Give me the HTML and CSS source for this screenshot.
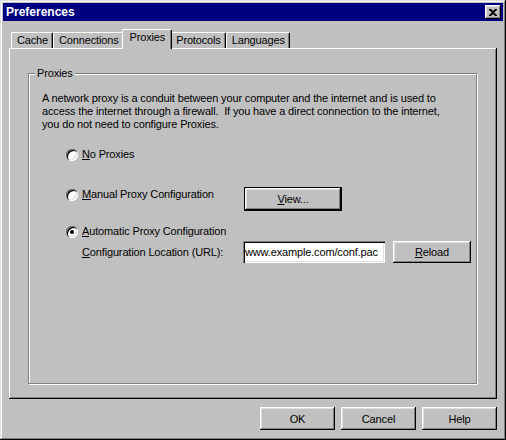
FILE: index.html
```html
<!DOCTYPE html>
<html lang="en">
<head>
<meta charset="UTF-8" />
<title>Preferences</title>
<link rel="stylesheet" href="styles.css">
</head>
<body>

  <div class="window" role="dialog" aria-label="Preferences">
    <div class="titlebar">
      <span class="title">Preferences</span>
      <button class="close" aria-label="Close">
        <svg width="8" height="7" viewBox="0 0 8 7">
          <path d="M0 0h2l2 2 2-2h2v1L5 3.5 8 6v1H6L4 5 2 7H0V6l3-2.5L0 1z" fill="#000"/>
        </svg>
      </button>
    </div>

    <div class="content">
      <div class="tabs">
        <div class="tab">Cache</div>
        <div class="tab">Connections</div>
        <div class="tab active">Proxies</div>
        <div class="tab">Protocols</div>
        <div class="tab">Languages</div>
      </div>

      <div class="panel">
        <div class="group">
          <div class="group-title">Proxies</div>
          <p class="intro">
            A network proxy is a conduit between your computer and the internet and is used to<br>
            access the internet through a firewall.&nbsp; If you have a direct connection to the internet,<br>
            you do not need to configure Proxies.
          </p>

          <div class="choices">
            <div class="row">
              <label class="option"><span class="radio"></span><span><u>N</u>o Proxies</span></label>
            </div>

            <div class="row row-manual">
              <label class="option"><span class="radio"></span><span><u>M</u>anual Proxy Configuration</span></label>
              <button class="btn btn-default btn-view"><u>V</u>iew...</button>
            </div>

            <div class="row row-auto">
              <label class="option"><span class="radio checked"></span><span><u>A</u>utomatic Proxy Configuration</span></label>
            </div>

            <div class="row row-url">
              <span class="url-label"><u>C</u>onfiguration Location (URL):</span>
              <input class="field" type="text" value="www.example.com/conf.pac" />
              <button class="btn btn-reload"><u>R</u>eload</button>
            </div>
          </div>
        </div>
      </div>

      <div class="footer">
        <button class="btn">OK</button>
        <button class="btn">Cancel</button>
        <button class="btn">Help</button>
      </div>
    </div>
  </div>

</body>
</html>
```

FILE: styles.css
```css
* {
  box-sizing: border-box;
}

html, body {
  margin: 0;
  background: #c0c0c0;
  font-family: 'Liberation Sans', Arial, sans-serif;
  font-size: 11px;
  letter-spacing: -0.15px;
  color: #000;
}

/* fenêtre style Windows 95 */
.window {
  width: 506px;
  height: 440px;
  padding: 3px;
  background: #c0c0c0;
  display: flex;
  flex-direction: column;
  box-shadow: inset -1px -1px 0 #000, inset 1px 1px 0 #dfdfdf,
              inset -2px -2px 0 #808080, inset 2px 2px 0 #fff;
}

.titlebar {
  height: 18px;
  background: #000080;
  color: #fff;
  display: flex;
  align-items: center;
  justify-content: space-between;
  padding: 0 2px 0 3px;
}

.title {
  font-weight: bold;
  font-size: 12px;
  letter-spacing: 0;
}

.close {
  width: 16px;
  height: 14px;
  padding: 0;
  border: none;
  background: #c0c0c0;
  display: flex;
  align-items: center;
  justify-content: center;
  box-shadow: inset -1px -1px 0 #000, inset 1px 1px 0 #fff,
              inset -2px -2px 0 #808080, inset 2px 2px 0 #dfdfdf;
}

.content {
  padding: 8px 6px 0 6px;
  flex: 1;
  display: flex;
  flex-direction: column;
}

/* onglets */
.tabs {
  display: flex;
  align-items: flex-end;
  height: 19px;
  padding-left: 2px;
}

.tab {
  height: 16px;
  line-height: 15px;
  padding: 0 4px 0 5px;
  border-top: 1px solid #fff;
  border-left: 1px solid #fff;
  border-right: 1px solid #000;
  border-radius: 2px 2px 0 0;
  box-shadow: inset -1px 0 0 #808080;
}

.tab.active {
  height: 20px;
  line-height: 15px;
  margin: 0 -2px -1px -2px;
  padding: 0 6px 0 7px;
  background: #c0c0c0;
  position: relative;
  z-index: 1;
}

.panel {
  height: 351px;
  padding: 25px 0 0 19px;
  box-shadow: inset -1px -1px 0 #000, inset 1px 1px 0 #fff,
              inset -2px -2px 0 #808080;
}

/* cadre de groupe gravé */
.group {
  width: 449px;
  height: 311px;
  padding: 0 13px;
  border: 1px solid #808080;
  box-shadow: inset 1px 1px 0 #fff, 1px 1px 0 #fff;
}

.group-title {
  width: fit-content;
  margin: -7px 0 0 -7px;
  padding: 0 2px;
  line-height: 13px;
  background: #c0c0c0;
}

.intro {
  margin: 12px 0 0 0;
  line-height: 13px;
  white-space: nowrap;
}

.choices {
  padding-left: 24px;
  margin-top: 17px;
}

.row {
  display: flex;
  align-items: center;
  line-height: 13px;
}

.row > * {
  flex-shrink: 0;
}

.option {
  display: flex;
  align-items: center;
  gap: 4px;
  width: 177px;
}

.radio {
  width: 12px;
  height: 12px;
  border-radius: 50%;
  background: #fff;
  display: grid;
  place-items: center;
  box-shadow: inset 1px 1px 0 #808080, inset 2px 2px 0 #000,
              inset -1px -1px 0 #fff, inset -2px -2px 0 #dfdfdf;
}

.radio.checked::after {
  content: "";
  width: 4px;
  height: 4px;
  border-radius: 50%;
  background: #000;
}

.row-manual {
  margin-top: 26px;
  align-items: flex-start;
}

.row-manual .option {
  margin-top: 1px;
}

.row-auto {
  margin-top: 14px;
}

.row-url {
  margin-top: 3px;
}

.url-label {
  width: 177px;
  padding-left: 16px;
}

/* boutons */
.btn {
  width: 75px;
  height: 23px;
  padding: 0;
  border: none;
  background: #c0c0c0;
  font-family: inherit;
  font-size: 11px;
  letter-spacing: inherit;
  color: #000;
  box-shadow: inset -1px -1px 0 #000, inset 1px 1px 0 #fff,
              inset -2px -2px 0 #808080, inset 2px 2px 0 #dfdfdf;
}

.btn-default {
  border: 1px solid #000;
}

.btn-view {
  width: 98px;
  height: 24px;
  margin-left: 1px;
}

.btn-reload {
  width: 78px;
  height: 22px;
  margin-left: 8px;
}

.field {
  width: 142px;
  height: 22px;
  padding: 0 2px;
  border: none;
  background: #fff;
  font-family: inherit;
  font-size: 11px;
  letter-spacing: inherit;
  color: #000;
  box-shadow: inset 1px 1px 0 #808080, inset 2px 2px 0 #000,
              inset -1px -1px 0 #fff, inset -2px -2px 0 #dfdfdf;
}

.footer {
  display: flex;
  justify-content: flex-end;
  gap: 6px;
  margin-top: 8px;
}
```
